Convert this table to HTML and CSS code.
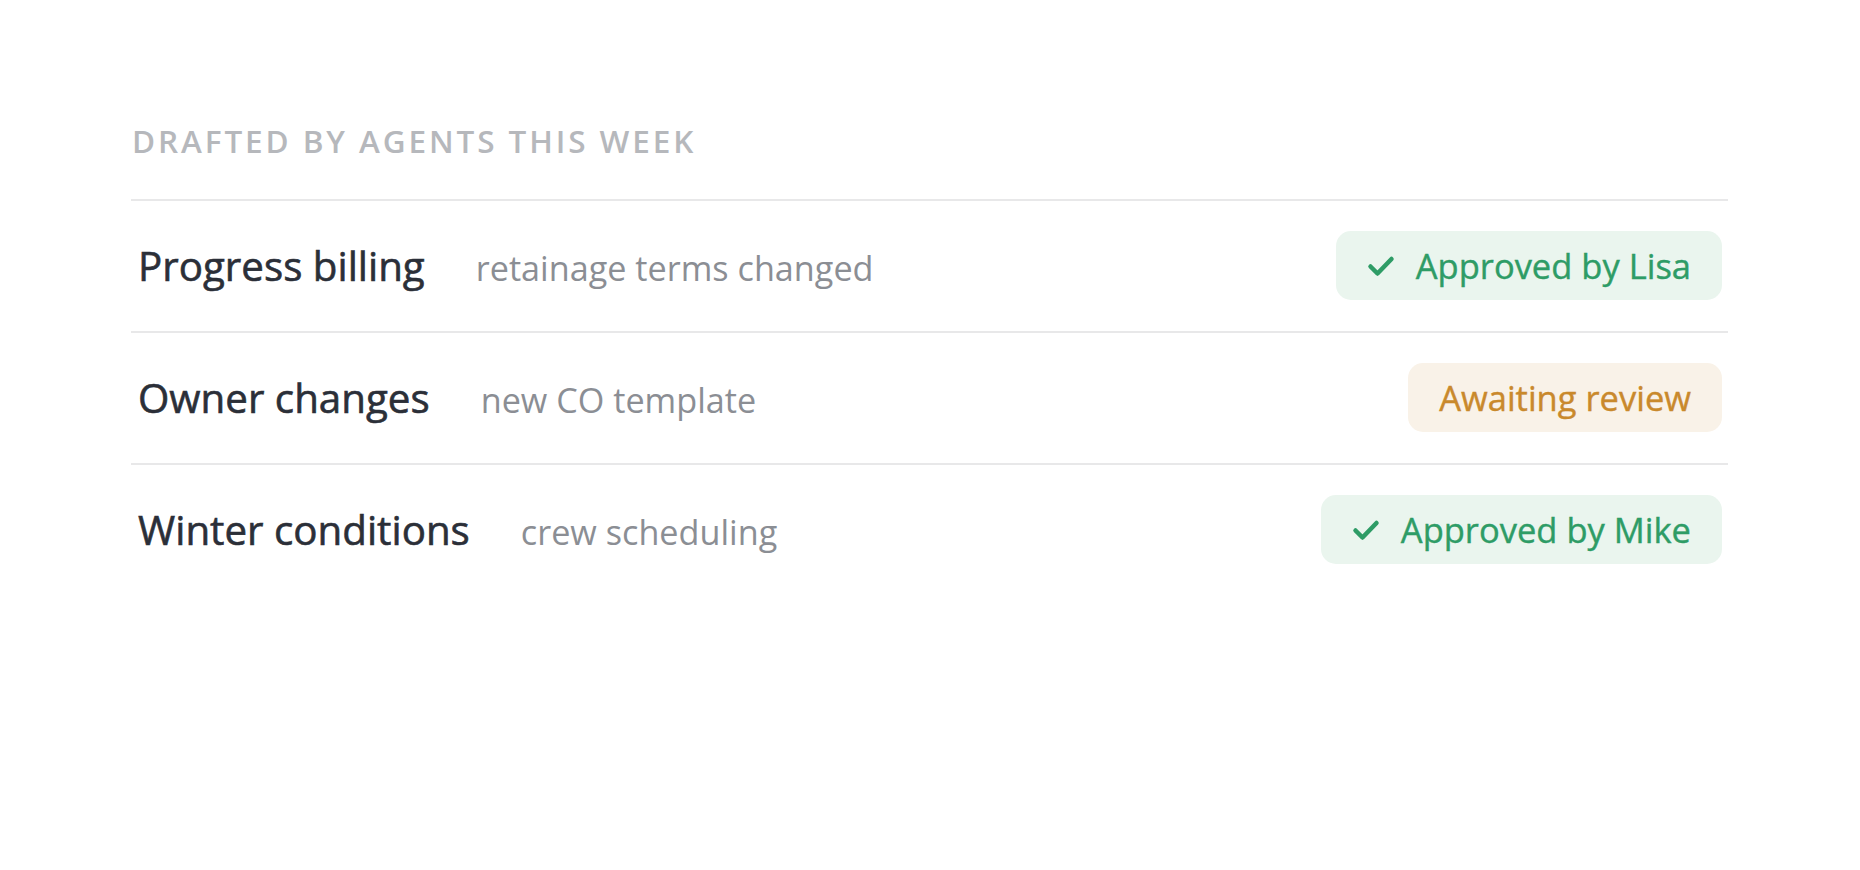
FILE: index.html
```html
<!DOCTYPE html>
<html lang="en">
<head>
  <meta charset="UTF-8" />
  <meta name="viewport" content="width=device-width, initial-scale=1.0" />
  <title>Drafted by agents</title>
  <link rel="stylesheet" href="styles.css">
</head>
<body>
  <div class="panel">
    <h2 class="titulo">Drafted by agents this week</h2>

    <div class="lista">
      <div class="fila">
        <div class="info">
          <span class="nombre">Progress billing</span>
          <span class="detalle">retainage terms changed</span>
        </div>
        <span class="estado aprobado">
          <svg class="check" viewBox="0 0 28 22" width="28" height="22"><path d="M3.5 11.5 L10.5 18.5 L24.5 4" /></svg>
          Approved by Lisa
        </span>
      </div>

      <div class="fila">
        <div class="info">
          <span class="nombre">Owner changes</span>
          <span class="detalle">new CO template</span>
        </div>
        <span class="estado pendiente">Awaiting review</span>
      </div>

      <div class="fila">
        <div class="info">
          <span class="nombre">Winter conditions</span>
          <span class="detalle">crew scheduling</span>
        </div>
        <span class="estado aprobado">
          <svg class="check" viewBox="0 0 28 22" width="28" height="22"><path d="M3.5 11.5 L10.5 18.5 L24.5 4" /></svg>
          Approved by Mike
        </span>
      </div>
    </div>
  </div>
</body>
</html>
```

FILE: styles.css
```css
* {
  box-sizing: border-box;
}

html, body {
  margin: 0;
  padding: 0;
  background-color: #fff;
  font-family: 'Open Sans', 'Liberation Sans', sans-serif;
}

.panel {
  padding: 125px 132px 0 131px;
}

.titulo {
  margin: 0 0 42px 1px;
  font-size: 31.5px;
  line-height: 1;
  font-weight: 600;
  letter-spacing: 2.9px;
  text-transform: uppercase;
  color: #b6b8bc;
}

.fila {
  display: flex;
  align-items: center;
  justify-content: space-between;
  height: 132px;
  padding: 0 6px 0 7px;
  border-top: 2px solid #e8e8e9;
}

.info {
  display: flex;
  align-items: baseline;
  gap: 51px;
}

.nombre {
  font-size: 40.3px;
  font-weight: 500;
  color: #2b2f38;
  -webkit-text-stroke: 0.6px #2b2f38;
}

.detalle {
  font-size: 34.2px;
  color: #8b8e94;
}

.estado {
  display: flex;
  align-items: center;
  gap: 21px;
  height: 69px;
  padding: 0 31px;
  border-radius: 15px;
  font-size: 34.5px;
  font-weight: 500;
  -webkit-text-stroke: 0.4px currentColor;
}

.aprobado {
  background-color: #eaf5ee;
  color: #2e9c66;
}

.pendiente {
  background-color: #f9f2e8;
  color: #c9892c;
}

.check path {
  fill: none;
  stroke: #2e9c66;
  stroke-width: 4.5;
  stroke-linecap: round;
  stroke-linejoin: round;
}
```
